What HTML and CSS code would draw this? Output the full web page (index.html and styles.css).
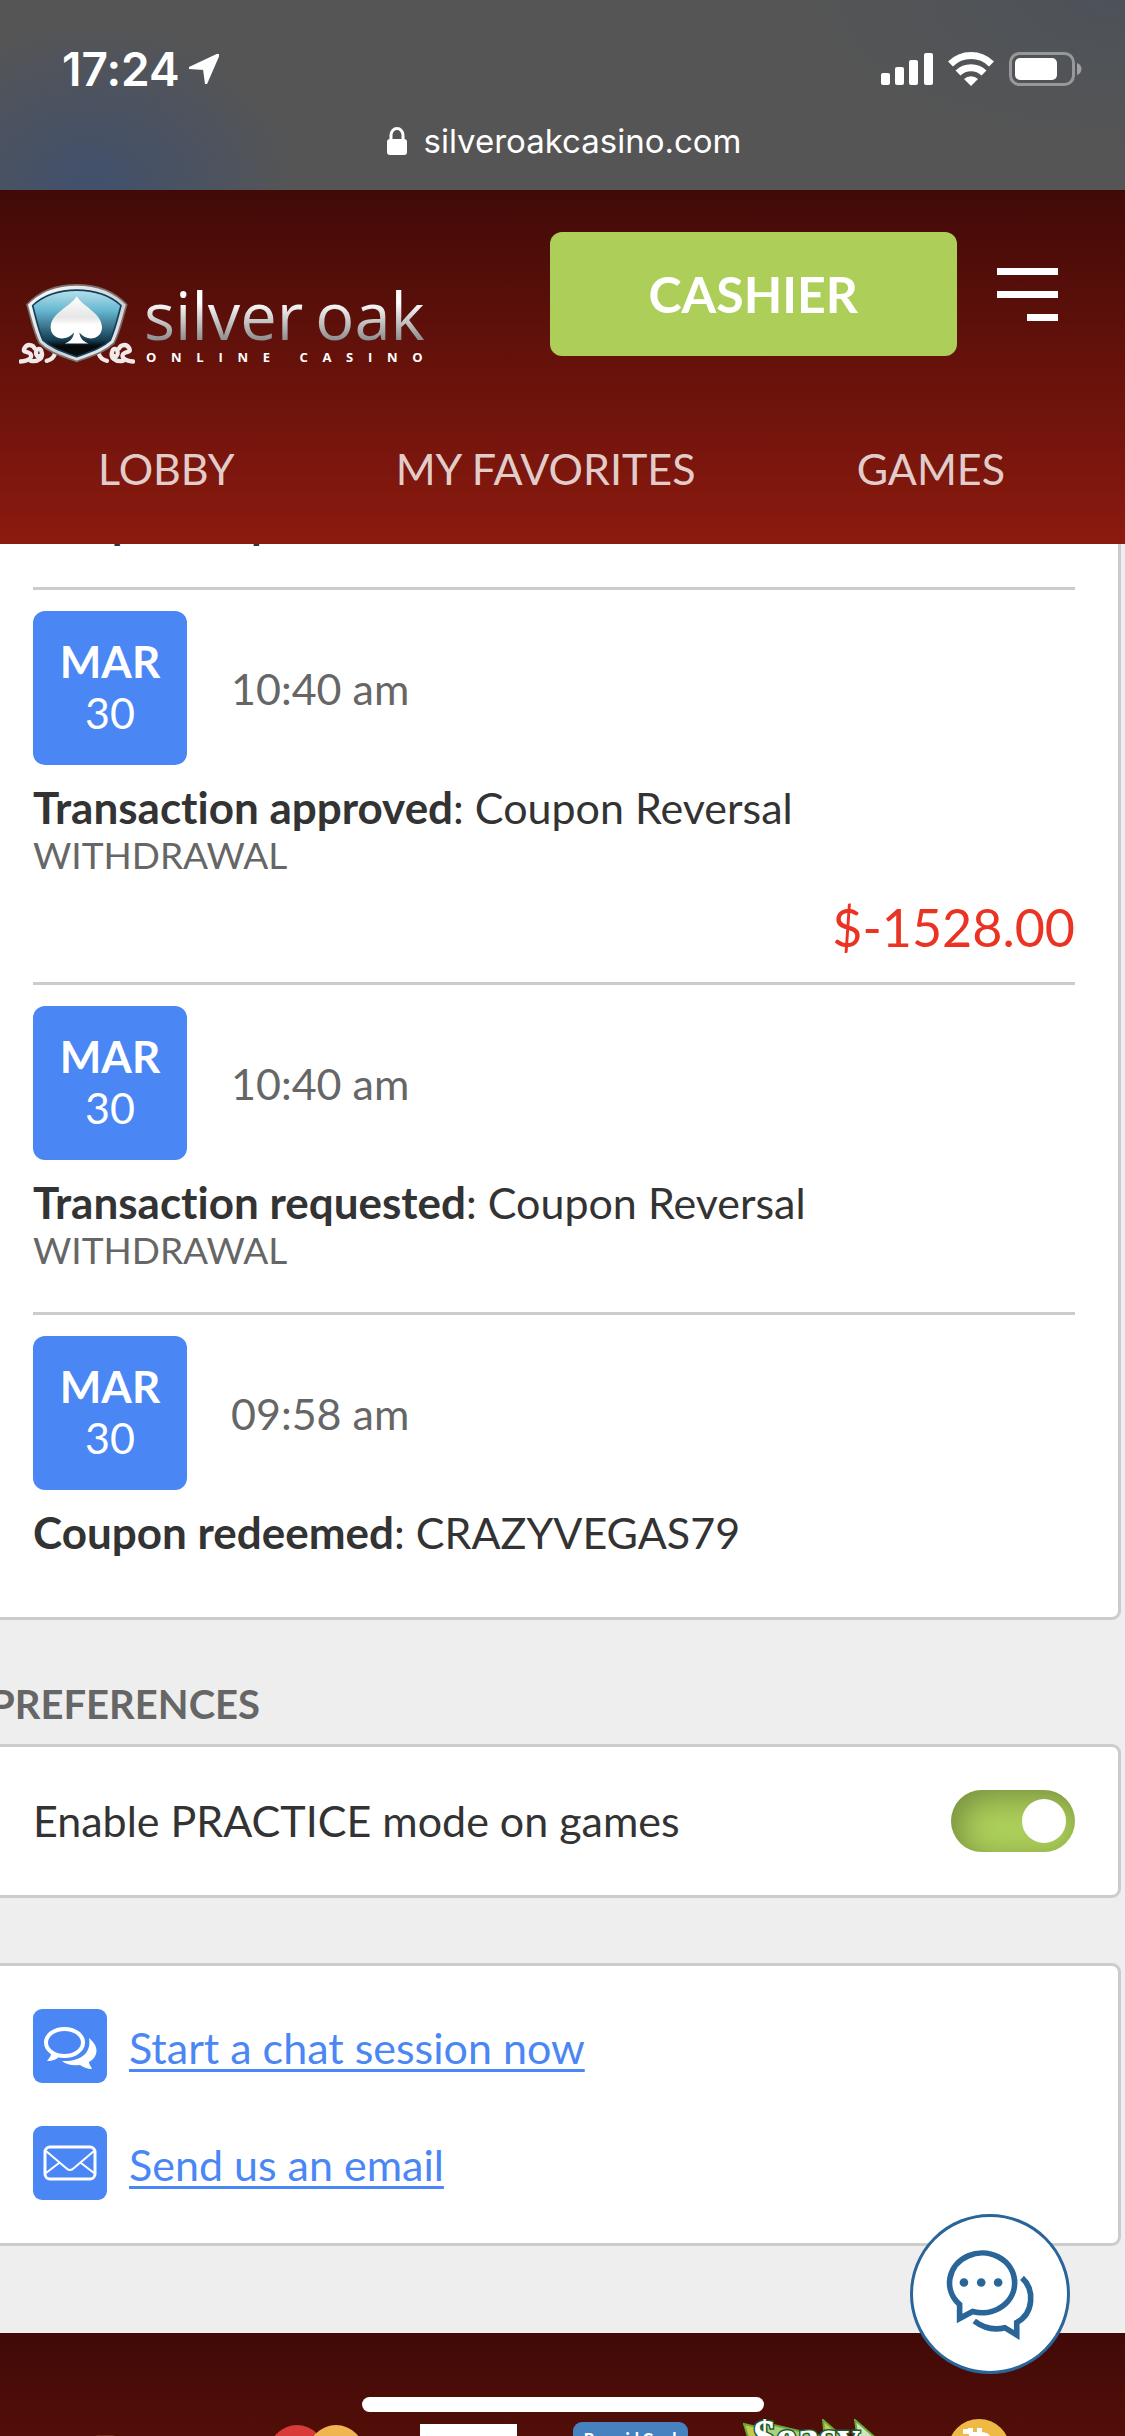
FILE: index.html
```html
<!DOCTYPE html>
<html lang="en">
<head>
    <meta charset="UTF-8">
    <meta name="viewport" content="width=device-width, initial-scale=1.0">
    <title>Silver Oak Casino - Account History</title>
    <link rel="stylesheet" href="styles.css">
</head>
<body>
    <div class="browser-bar">
        <div class="status-row">
            <div class="clock">
                <span>17:24</span>
                <svg width="30" height="30" viewBox="0 0 30 30"><path d="M30 0 L0 14 L15 15 L17 30 Z" fill="#fff" stroke="#fff" stroke-width="2" stroke-linejoin="round"/></svg>
            </div>
            <div class="indicators">
                <svg width="52" height="34" viewBox="0 0 52 34" fill="#fff">
                    <rect x="0" y="21" width="9" height="12" rx="2"/>
                    <rect x="14" y="15" width="9" height="18" rx="2"/>
                    <rect x="28" y="8" width="9" height="25" rx="2"/>
                    <rect x="43" y="1" width="9" height="32" rx="2"/>
                </svg>
                <svg width="46" height="34" viewBox="0 0 46 34">
                    <g fill="none" stroke="#fff" stroke-width="7">
                        <path d="M2.500 12 A29 29 0 0 1 43.500 12"/>
                        <path d="M10 21 A18.500 18.500 0 0 1 36 21"/>
                    </g>
                    <path d="M16 27 A10 10 0 0 1 30 27 L23 34 Z" fill="#fff"/>
                </svg>
                <svg width="74" height="34" viewBox="0 0 74 34">
                    <rect x="1.500" y="1.500" width="63" height="31" rx="9" fill="none" stroke="#fff" stroke-opacity=".4" stroke-width="3"/>
                    <rect x="6" y="6" width="42" height="22" rx="5" fill="#fff"/>
                    <path d="M68 11 C74 13 74 21 68 23 Z" fill="#fff" fill-opacity=".45"/>
                </svg>
            </div>
        </div>
        <div class="address">
            <svg width="20" height="28" viewBox="0 0 20 28">
                <rect x="0" y="12" width="20" height="16" rx="3" fill="#fff"/>
                <path d="M4 13 V8 A6 6.500 0 0 1 16 8 V13" fill="none" stroke="#fff" stroke-width="3"/>
            </svg>
            <span>silveroakcasino.com</span>
        </div>
    </div>

    <header class="site-header">
        <div class="header-top">
            <a class="logo" href="#" aria-label="Silver Oak Online Casino">
                <svg class="logo-mark" viewBox="57 70 348 245">
                    <defs>
                        <linearGradient id="rim" x1="0" y1="0" x2="1" y2="1">
                            <stop offset="0" stop-color="#fff"/>
                            <stop offset=".6" stop-color="#cfcfcf"/>
                            <stop offset="1" stop-color="#fff"/>
                        </linearGradient>
                        <linearGradient id="field" x1="0" y1="0" x2="0" y2="1">
                            <stop offset="0" stop-color="#b9e0ea"/>
                            <stop offset=".3" stop-color="#67b9d2"/>
                            <stop offset=".75" stop-color="#153d52"/>
                            <stop offset=".84" stop-color="#08090a"/>
                            <stop offset="1" stop-color="#0c0c0c"/>
                        </linearGradient>
                        <linearGradient id="spade" x1="0" y1="0" x2="0" y2="1">
                            <stop offset="0" stop-color="#fff"/>
                            <stop offset=".45" stop-color="#e6e6e6"/>
                            <stop offset=".6" stop-color="#fff"/>
                        </linearGradient>
                    </defs>
                    <!-- flourishes -->
                    <g fill="none" stroke="#efe9e9" stroke-width="13" stroke-linecap="round">
                        <path d="M62 305 C88 303 100 292 90 281 C80 272 66 280 74 264 C82 250 100 255 104 266"/>
                        <path d="M92 303 C118 307 130 292 125 277 C122 264 110 264 108 278 C107 288 114 292 120 288"/>
                        <path d="M140 303 C152 300 162 292 165 281"/>
                    </g>
                    <g fill="none" stroke="#efe9e9" stroke-width="13" stroke-linecap="round" transform="translate(461 0) scale(-1 1)">
                        <path d="M62 305 C88 303 100 292 90 281 C80 272 66 280 74 264 C82 250 100 255 104 266"/>
                        <path d="M92 303 C118 307 130 292 125 277 C122 264 110 264 108 278 C107 288 114 292 120 288"/>
                        <path d="M140 303 C152 300 162 292 165 281"/>
                    </g>
                    <!-- shield -->
                    <path d="M81 134 C120 92 170 75 230 75 C290 75 340 92 380 134 C368 175 360 215 342 250 C312 280 270 290 230 305 C190 290 148 280 118 250 C100 215 93 175 81 134 Z" fill="url(#rim)" stroke="#77706e" stroke-width="5"/>
                    <path d="M98 137 C135 103 180 91 230 91 C280 91 326 103 363 137 C353 175 345 210 331 241 C302 268 266 277 230 291 C194 277 158 268 129 241 C115 210 108 175 98 137 Z" fill="url(#field)" stroke="#123f60" stroke-width="5"/>
                    <path d="M230 109 C246 138 306 160 306 202 C306 238 262 248 238 218 C240 236 250 245 266 251 H194 C210 245 220 236 222 218 C198 248 152 238 152 202 C152 160 214 138 230 109 Z" fill="url(#spade)"/>
                </svg>
                <span class="logo-text">
                    <span class="logo-name"><span>silver</span><span>oak</span></span>
                    <span class="logo-tag"><i>O</i><i>N</i><i>L</i><i>I</i><i>N</i><i>E</i><i> </i><i>C</i><i>A</i><i>S</i><i>I</i><i>N</i><i>O</i></span>
                </span>
            </a>
            <button class="cashier" type="button">CASHIER</button>
            <button class="menu" type="button" aria-label="Menu">
                <span></span>
                <span></span>
                <span></span>
            </button>
        </div>
        <nav class="main-nav">
            <a href="#">LOBBY</a>
            <a href="#">MY FAVORITES</a>
            <a href="#">GAMES</a>
        </nav>
    </header>

    <main class="content">
        <section class="card history">
            <article class="entry coupon">
                <div class="entry-title"><strong>Coupon requested</strong>:</div>
            </article>
            <article class="entry">
                <div class="entry-head">
                    <div class="date"><strong>MAR</strong><span>30</span></div>
                    <time>10:40 am</time>
                </div>
                <div class="entry-title"><strong>Transaction approved</strong>: Coupon Reversal</div>
                <div class="entry-type">WITHDRAWAL</div>
                <div class="amount">$-1528.00</div>
            </article>
            <article class="entry">
                <div class="entry-head">
                    <div class="date"><strong>MAR</strong><span>30</span></div>
                    <time>10:40 am</time>
                </div>
                <div class="entry-title"><strong>Transaction requested</strong>: Coupon Reversal</div>
                <div class="entry-type">WITHDRAWAL</div>
            </article>
            <article class="entry coupon">
                <div class="entry-head">
                    <div class="date"><strong>MAR</strong><span>30</span></div>
                    <time>09:58 am</time>
                </div>
                <div class="entry-title"><strong>Coupon redeemed</strong>: CRAZYVEGAS79</div>
            </article>
        </section>

        <h2>PREFERENCES</h2>
        <section class="card preference">
            <label for="practice">Enable PRACTICE mode on games</label>
            <input class="toggle" type="checkbox" id="practice" checked>
        </section>

        <section class="card contact">
            <div class="contact-row">
                <svg class="tile" viewBox="0 0 74 74">
                    <ellipse cx="31.500" cy="33.500" rx="18.500" ry="13.500" fill="none" stroke="#fff" stroke-width="4"/>
                    <path d="M18 42 C19 47 16 49 14 52 C20 52 24 50 27 47 Z" fill="#fff"/>
                    <path d="M56 29 C67 38 65 48 56 53 C56 56 58 57 59 60 C54 60 50 58 47 56 C40 57 34 56 29 52 C46 53 59 45 56 29 Z" fill="#fff"/>
                </svg>
                <a href="#">Start a chat session now</a>
            </div>
            <div class="contact-row">
                <svg class="tile" viewBox="0 0 74 74" fill="none" stroke="#fff">
                    <rect x="12" y="21" width="50" height="32" rx="5" stroke-width="3"/>
                    <path d="M13 25 L33 42 Q37 46 41 42 L61 25 M13 47 L26 37 M61 47 L48 37" stroke-width="2"/>
                </svg>
                <a href="#">Send us an email</a>
            </div>
        </section>
    </main>

    <footer class="site-footer">
        <div class="payments">
            <svg class="pay-visa" viewBox="0 0 118 60"><path d="M0 11 H18 L22 20 H4 Z" fill="#6e2c17"/></svg>
            <svg class="pay-master" viewBox="0 0 96 60">
                <circle cx="28" cy="28" r="28" fill="#d93b38"/>
                <circle cx="67" cy="28" r="28" fill="#f0b450"/>
            </svg>
            <div class="pay-blank"></div>
            <div class="pay-prepaid">Prepaid Card</div>
            <svg class="pay-easy" viewBox="0 0 150 60">
                <g stroke="#6aa83c" stroke-width="2">
                    <path d="M1 5 L30 12 V40 H12 Z" fill="#c4ca4c"/>
                    <path d="M22 4 L82 18 V40 H30 Z" fill="#a9d27b"/>
                    <path d="M80 1 L104 22 V40 H84 Z" fill="#c4ca4c"/>
                    <path d="M112 1 L136 22 V40 H118 Z" fill="#cfe5bb"/>
                </g>
                <text x="10" y="33" font-family="Liberation Serif, serif" font-size="46" font-weight="bold" fill="#fff" stroke="#1d5b33" stroke-width="3" paint-order="stroke">$easy</text>
            </svg>
            <svg class="pay-bitcoin" viewBox="0 0 62 62">
                <circle cx="31" cy="31" r="31" fill="#efb945"/>
                <path d="M20 10 H15 V15 H21 V46 H34 C48 46 48 31 40 29 C46 26 46 14 34 13 V9 H29 V13 H25 V9 H20 Z" fill="#fff"/>
            </svg>
        </div>
    </footer>

    <button class="chat-button" type="button" aria-label="Live chat">
        <svg width="92" height="93" viewBox="195 200 275 280">
            <g fill="none" stroke="#2a6599" stroke-width="17">
                <path d="M241 370 A98 90 0 1 1 280 391 L241 412 Z"/>
                <path d="M429 290 C468 325 464 398 413 424 L413 462 L377 440 C340 450 312 440 285 420"/>
            </g>
            <g fill="#2a6599">
                <circle cx="254" cy="304" r="13"/>
                <circle cx="306" cy="304" r="13"/>
                <circle cx="357" cy="304" r="13"/>
            </g>
        </svg>
    </button>
    <div class="home-indicator"></div>
</body>
</html>
```
FILE: styles.css
```css
* {
    box-sizing: border-box;
}
body {
    display: flex;
    flex-direction: column;
    height: 100vh;
    margin: 0;
    overflow: hidden;
    background: #eee;
    color: #333;
    font-family: Lato, sans-serif;
    font-size: 43px;
    font-variant-ligatures: none;
    line-height: 48px;
}
svg {
    display: block;
    flex: none;
}
button {
    border: none;
    padding: 0;
    cursor: pointer;
}
strong {
    font-size: 44px;
}

/* browser chrome */
.browser-bar {
    position: relative;
    z-index: 2;
    padding: 42px 0 23px;
    flex: none;
    background:
        radial-gradient(ellipse 210px 170px at 90px 190px, #41506d, transparent),
        radial-gradient(ellipse 340px 150px at 100% 0, #4d5259, transparent),
        #555;
    color: #fff;
    font-family: Inter, sans-serif;
}
.status-row,
.clock,
.indicators,
.address {
    display: flex;
    align-items: center;
}
.status-row {
    justify-content: space-between;
    height: 54px;
    padding: 0 42px 0 62px;
}
.clock {
    gap: 9px;
    font-size: 46px;
    font-weight: 600;
}
.indicators {
    gap: 15px;
}
.address {
    justify-content: center;
    gap: 16px;
    height: 52px;
    margin-top: 19px;
    padding-left: 4px;
    font-size: 33px;
}

/* header */
.site-header {
    position: relative;
    z-index: 2;
    flex: none;
    padding: 42px 67px 49px 19px;
    background: linear-gradient(#410a07, #8c1a0f);
}
.header-top {
    display: flex;
    align-items: flex-start;
}
.logo {
    display: flex;
    margin-top: 51px;
    margin-right: auto;
    color: #fff;
    text-decoration: none;
}
.logo-mark {
    width: 116px;
    height: 82px;
}
.logo-text {
    margin-left: 9px;
    font-family: "Open Sans", sans-serif;
}
.logo-name {
    display: flex;
    gap: 12px;
    font-size: 65px;
    line-height: 64px;
    background: linear-gradient(#fff 30%, #8c8c8c 90%);
    background-clip: text;
    -webkit-background-clip: text;
    color: transparent;
}
.logo-tag {
    display: flex;
    justify-content: space-between;
    margin-top: 3px;
    padding: 0 2px;
    font-size: 13px;
    font-weight: 700;
    line-height: 14px;
}
.logo-tag i {
    font-style: normal;
}
.cashier {
    padding: 30px 99px;
    border-radius: 12px;
    background: #adcf5a;
    color: #fff;
    font: 700 50px/64px Lato, sans-serif;
}
.menu {
    display: flex;
    flex-direction: column;
    align-items: flex-end;
    gap: 16px;
    margin: 36px 0 0 40px;
    background: none;
}
.menu span {
    width: 61px;
    height: 7px;
    background: #fff;
}
.menu span:last-child {
    width: 31px;
}
.main-nav {
    display: flex;
    justify-content: space-between;
    margin-top: 78px;
    padding: 0 53px 0 79px;
    line-height: 52px;
}
.main-nav a {
    color: rgba(255,255,255,0.8);
    text-decoration: none;
}

/* account cards, scrolled slightly past the left edge */
.content {
    flex: none;
    margin: -49px 4px 0 -10px;
}
.card {
    padding: 0 43px 0 40px;
    border: 3px solid #ccc;
    border-radius: 9px;
    background: white;
}
.history {
    padding-bottom: 20px;
}
.entry {
    padding-bottom: 22px;
}
.entry + .entry {
    padding-top: 21px;
    border-top: 3px solid #ccc;
}
.entry.coupon {
    padding-bottom: 41px;
}
.entry-head {
    display: flex;
    align-items: center;
    gap: 44px;
    margin-bottom: 18px;
    color: #666;
}
.entry-head time {
    padding-top: 2px;
}
.date {
    display: flex;
    flex-direction: column;
    align-items: center;
    justify-content: center;
    width: 154px;
    height: 154px;
    padding-bottom: 3px;
    border-radius: 12px;
    background: #4a87f5;
    color: white;
    line-height: 52px;
}
.entry-title {
    height: 48px;
}
.entry-type {
    margin-bottom: 16px;
    color: #666;
    font-size: 37px;
}
.amount {
    color: #ea3323;
    font-size: 52px;
    line-height: 65px;
    text-align: right;
}
h2 {
    margin: 60px 0 16px;
    color: #666;
    font-size: 40px;
    line-height: 48px;
}
.preference {
    display: flex;
    align-items: center;
    justify-content: space-between;
    padding-top: 43px;
    padding-bottom: 43px;
}
.toggle {
    display: flex;
    align-items: center;
    appearance: none;
    width: 124px;
    height: 62px;
    margin: 0;
    padding: 9px;
    border-radius: 31px;
    background: #ccc;
    box-shadow: inset 8px 8px 30px rgba(0,0,0,0.3);
    cursor: pointer;
}
.toggle::before {
    content: "";
    width: 44px;
    height: 44px;
    border-radius: 50%;
    background: white;
}
.toggle:checked {
    justify-content: flex-end;
    background: #adcf5a;
}
.contact {
    display: flex;
    flex-direction: column;
    gap: 43px;
    margin-top: 65px;
    padding-top: 43px;
    padding-bottom: 43px;
}
.contact-row {
    display: flex;
    align-items: center;
    gap: 22px;
}
.contact-row a {
    padding-top: 4px;
    color: #4a87f5;
    text-decoration-thickness: 3px;
    text-underline-offset: 5px;
    text-decoration-skip-ink: none;
}
.tile {
    width: 74px;
    height: 74px;
    border-radius: 9px;
    background: #4a87f5;
}

/* footer */
.site-footer {
    flex: 1;
    min-height: 0;
    margin-top: 87px;
    padding: 86px 115px 0 96px;
    overflow: hidden;
    background: linear-gradient(#410a07, #520e09);
}
.payments {
    display: flex;
    justify-content: space-between;
    align-items: flex-start;
}
.pay-visa {
    width: 118px;
    margin-top: 5px;
}
.pay-master {
    width: 96px;
    margin-top: 6px;
}
.pay-blank {
    width: 97px;
    height: 60px;
    margin-top: 5px;
    background: white;
}
.pay-prepaid {
    width: 115px;
    height: 60px;
    margin-top: 3px;
    padding-top: 7px;
    border-radius: 9px;
    background: #4682c0;
    color: white;
    font-size: 16px;
    font-weight: 900;
    line-height: 20px;
    text-align: center;
}
.pay-easy {
    width: 150px;
}
.pay-bitcoin {
    width: 62px;
}

/* overlays */
.chat-button {
    position: fixed;
    z-index: 3;
    right: 55px;
    bottom: 62px;
    display: flex;
    align-items: center;
    justify-content: center;
    width: 160px;
    height: 160px;
    border: 3px solid #2a6599;
    border-radius: 50%;
    background: white;
}
.home-indicator {
    position: fixed;
    z-index: 3;
    bottom: 24px;
    left: 50%;
    width: 402px;
    height: 15px;
    margin-left: -201px;
    border-radius: 8px;
    background: white;
}
```
